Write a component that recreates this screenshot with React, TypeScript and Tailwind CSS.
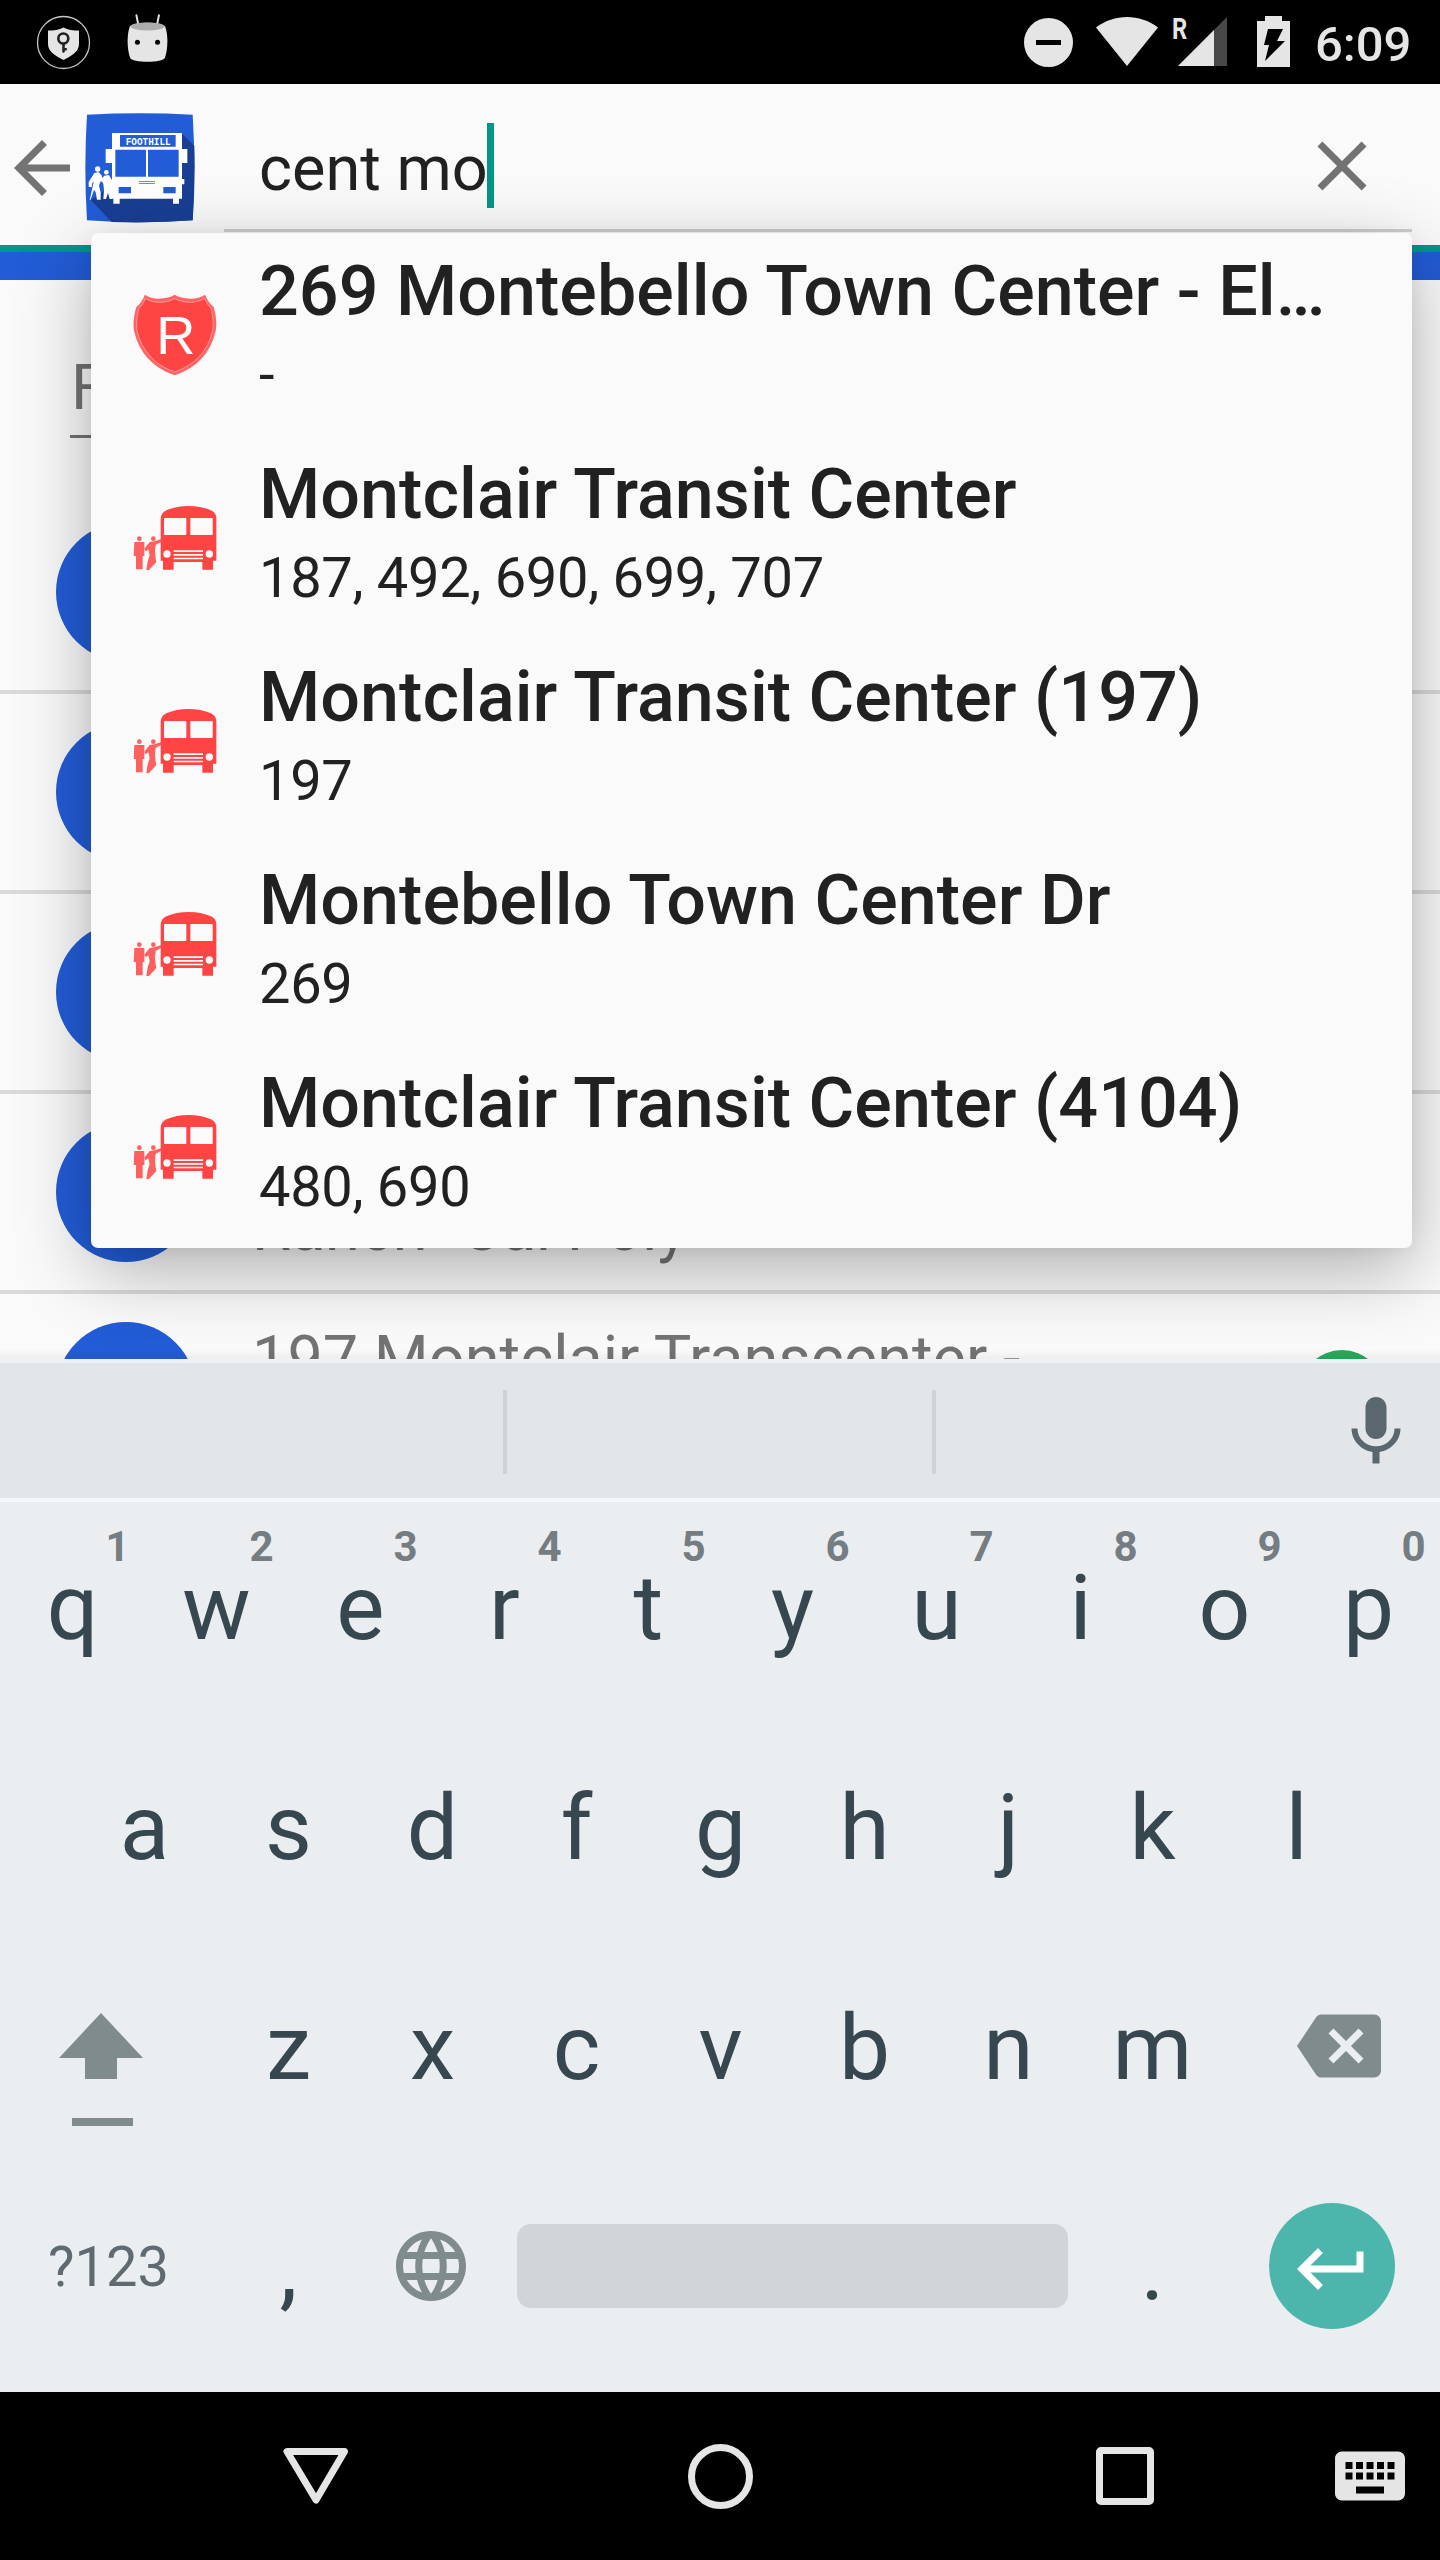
import React, { FC } from "react";
import {
  MdArrowBack,
  MdBackspace,
  MdClose,
  MdKeyboard,
  MdKeyboardReturn,
  MdLanguage,
} from "react-icons/md";

interface ISuggestion {
  type: "route" | "stop";
  title: string;
  routes: string;
}

interface IRoute {
  number: string;
  lines: string[];
}

const suggestions: ISuggestion[] = [
  { type: "route", title: "269 Montebello Town Center - El…", routes: "-" },
  {
    type: "stop",
    title: "Montclair Transit Center",
    routes: "187, 492, 690, 699, 707",
  },
  { type: "stop", title: "Montclair Transit Center (197)", routes: "197" },
  { type: "stop", title: "Montebello Town Center Dr", routes: "269" },
  {
    type: "stop",
    title: "Montclair Transit Center (4104)",
    routes: "480, 690",
  },
];

const routes: IRoute[] = [
  { number: "1", lines: [] },
  { number: "1", lines: [] },
  { number: "1", lines: [] },
  { number: "1", lines: ["", "Ranch- Cal Poly"] },
  { number: "", lines: ["197 Montclair Transcenter -", ""] },
];

const topRow = "qwertyuiop".split("");
const homeRow = "asdfghjkl".split("");
const bottomRow = "zxcvbnm".split("");

const StatusBar: FC = () => (
  <div className="flex h-[84px] shrink-0 items-start bg-black text-[#e5e5e5]">
    <svg className="ml-[36px] mt-[15px] h-[55px] w-[55px]" viewBox="0 0 55 55">
      <circle
        cx="27.5"
        cy="27.5"
        r="26"
        fill="none"
        stroke="#c8c8c8"
        strokeWidth="1.3"
      />
      <path
        d="M27.5 12.5C23 15 18 15.6 12 15.6V29c0 8 8 12 15.5 16C35 41 43 37 43 29V15.6c-6 0-11-.6-15.500-3.100z"
        fill="#e5e5e5"
      />
      <circle
        cx="27.300"
        cy="23.500"
        r="5"
        fill="none"
        stroke="#222"
        strokeWidth="2.600"
      />
      <path d="M26.200 28h2.600v5h2v2.500h-2v1.500l-1.300 1-1.300-1z" fill="#222" />
    </svg>
    <svg
      className="ml-[36px] mt-[14px] h-[49px] w-[41px]"
      viewBox="0 0 122 146"
    >
      <path
        d="M28 4l6 30M95 4l-6 30"
        stroke="#e5e5e5"
        strokeWidth="6"
        strokeLinecap="round"
      />
      <path
        d="M8 38C20 22 102 22 114 38c9 26 8 66-1 92-6 16-98 16-104 0C0 104-1 64 8 38z"
        fill="#e5e5e5"
      />
      <ellipse cx="61" cy="37" rx="50" ry="12" fill="#adadad" />
      <circle cx="31" cy="84" r="7.500" fill="#000" />
      <circle cx="91" cy="84" r="7.500" fill="#000" />
    </svg>
    <svg
      className="ml-auto mt-[18px] h-[49px] w-[49px]"
      viewBox="0 0 49 49"
      fill="#e5e5e5"
    >
      <circle cx="24.500" cy="24.500" r="24.500" />
      <rect x="12" y="22" width="25" height="5" fill="#000" />
    </svg>
    <svg
      className="ml-[23px] mt-[17px] h-[49px] w-[62px]"
      viewBox="0 0 62 49"
      fill="#e5e5e5"
    >
      <path d="M0 10.500C18-3.500 44-3.500 62 10.500L31 49z" />
    </svg>
    <div className="relative ml-[20px] mt-[17px] h-[49px] w-[49px]">
      <svg className="h-[49px] w-[49px]" viewBox="0 0 49 49">
        <path d="M49 0v49H0z" fill="#484848" />
        <path d="M36 13v36H0z" fill="#e5e5e5" />
      </svg>
      <span className="absolute -left-[6px] -top-[4px] origin-left scale-x-[0.82] text-[29px] leading-[32px] font-bold">
        R
      </span>
    </div>
    <svg
      className="ml-[30px] mt-[16px] h-[51px] w-[33px]"
      viewBox="0 0 33 51"
      fill="#e5e5e5"
    >
      <path d="M8 0h17v5h8v46H0V5h8z" />
      <path d="M11 13h15l-6 12h8L8 45l4-16H7z" fill="#000" />
    </svg>
    <div className="mr-[29px] ml-[25px] w-[96px] text-[49px] leading-[89px] font-medium">
      6:09
    </div>
  </div>
);

const AppLogo: FC = () => (
  <svg className="h-[110px] w-[110px]" viewBox="0 0 330 330">
    <path
      d="M6 5Q165-3 323 5Q333 165 323 322Q165 334 6 322Q-4 165 6 5z"
      fill="#225cd6"
    />
    <path d="M291 62l37 36Q331 215 323 322Q200 331 80 327L18 262z" fill="#193f93" />
    <g fill="#fff">
      <path d="M81 60h210v197H81zM85 257h19v15H85zM264 257h18v15h-18z" />
      <path d="M62 108h19v42H62zM291 108h16v42h-16zM81 198h217v16H81z" />
      <circle cx="38" cy="168" r="8" />
      <path d="M28 180l12-3 10 10 4 17-8 2-4 12 5 20v22h-11l-4-22-5-8-6 18-5 13H14l8-36 4-18-4 2-2 14-9-2v-14z" />
      <circle cx="64" cy="178" r="7" />
      <path d="M58 188l14-2 9 16v56h-7l-5-18-6 18h-8l2-26-2-20-8-12z" />
    </g>
    <g fill="#225cd6">
      <path d="M105 66h167v35H105zM91 110h92v81H91zM189 110h92v81h-92z" />
      <path d="M101 222h37v19h-37zM235 222h37v19h-37z" />
      <path d="M162 204h48v3h-48zM162 210h48v3h-48z" opacity=".7" />
    </g>
    <text
      x="122"
      y="97"
      fill="#fff"
      fontFamily="Liberation Mono, monospace"
      fontWeight="700"
      fontSize="34"
      textLength="135"
      lengthAdjust="spacingAndGlyphs"
    >
      FOOTHILL
    </text>
  </svg>
);

const SearchBar: FC = () => (
  <div className="flex h-[168px] shrink-0 border-b-[7px] border-[#009688] bg-[#fafafa] text-[#737373]">
    <MdArrowBack className="mt-[42px] size-[84px] shrink-0" />
    <div className="mt-[29px] ml-px shrink-0">
      <AppLogo />
    </div>
    <div className="mr-[28px] ml-[29px] flex h-[148px] flex-1 items-start border-b-[3px] border-[#d0d0d0]">
      <div className="ml-[35px] text-[63px] leading-[170px] text-[#212121]">
        cent mo
      </div>
      <div className="mt-[39px] -ml-px h-[85px] w-[7px] bg-[#009688]" />
      <MdClose className="mt-[40px] mr-[28px] ml-auto size-[84px]" />
    </div>
  </div>
);

const RouteList: FC = () => (
  <div className="flex flex-col">
    {routes.map((route, i) => (
      <div
        key={i}
        className="flex h-[200px] shrink-0 items-center border-b-4 border-[#dadada] pr-[56px] pl-[56px]"
      >
        <div className="flex size-[140px] shrink-0 items-center rounded-full bg-[#225cd6] pl-[33px] text-[42px] text-white">
          {route.number}
        </div>
        <div className="ml-[56px] flex-1 pt-[4px] text-[63px] leading-[70px] text-[#737373]">
          {route.lines.map((line, j) => (
            <div key={j} className="h-[70px]">
              {line}
            </div>
          ))}
        </div>
        <div className="size-[84px] rounded-full bg-[#27a95a]" />
      </div>
    ))}
  </div>
);

const RouteShieldIcon: FC = () => (
  <svg className="h-[82px] w-[84px]" viewBox="0 0 254 246">
    <path
      d="M36 1Q60 17 92 12Q114 9 126 1Q138 9 160 12Q194 17 218 1Q228 26 244 38Q256 80 250 110Q228 210 126 245Q26 210 3 110Q-2 80 10 38Q26 26 36 1z"
      fill="#ff6464"
    />
    <path
      d="M38 12Q62 28 94 23Q115 20 126 13Q138 20 158 23Q192 28 216 12Q226 32 236 43Q246 80 241 110Q219 202 126 235Q34 202 12 110Q8 80 18 43Q30 32 38 12z"
      fill="#ff4444"
      stroke="#ff9a9a"
      strokeWidth="3"
    />
    <text
      x="70"
      y="180"
      fill="#fff"
      fontFamily="Liberation Sans, sans-serif"
      fontSize="164"
    >
      R
    </text>
  </svg>
);

const BusStopIcon: FC = () => (
  <svg className="h-[64px] w-[84px]" viewBox="0 0 252 192" fill="#ff4444">
    <path d="M83 38Q84 20 100 13Q130 0 167 0Q204 0 234 13Q250 20 250 38V164H240V191H208V168H122V191H90V164H83z" />
    <g fill="#fafafa">
      <rect x="93" y="36" width="67" height="51" rx="2" />
      <rect x="172" y="36" width="67" height="51" rx="2" />
      <circle cx="102" cy="144" r="11" />
      <circle cx="229" cy="144" r="11" />
      <path d="M122 133h88v5h-88zM122 144h88v5h-88zM122 155h88v5h-88z" />
    </g>
    <g opacity=".85">
      <circle cx="19" cy="98" r="7" />
      <path d="M4 108h30v42h-5v40H9v-40H2z" />
      <circle cx="61" cy="98" r="7" />
      <path d="M50 108l14-2 20-6v8l-16 8-2 20 2 22 2 10-22 24h-8l4-26 6-18-4-18-8 6-4-8z" />
    </g>
  </svg>
);

const SuggestionsPopup: FC = () => (
  <div className="absolute top-[149px] left-[91px] w-[1321px] rounded-[7px] bg-[#fafafa] text-[#212121] shadow-[0_22px_76px_rgba(0,0,0,0.3),0_2px_16px_rgba(0,0,0,0.06)]">
    {suggestions.map(({ type, title, routes }) => (
      <div key={title} className="flex h-[203px] pl-[42px]">
        <div className="flex w-[126px] shrink-0 items-center">
          {type === "route" ? <RouteShieldIcon /> : <BusStopIcon />}
        </div>
        <div className="min-w-0 flex-1 pt-[17px] whitespace-nowrap">
          <div className="text-[70px] leading-[82px] font-medium tracking-[0.05px]">
            {title}
          </div>
          <div className="text-[56px] leading-[86px] tracking-[-0.3px]">
            {routes}
          </div>
        </div>
      </div>
    ))}
  </div>
);

const Key: FC<{ label: string; hint?: string }> = ({ label, hint }) => (
  <div className="relative w-[144px] pl-px text-center text-[91px] leading-[212px] text-[#37474f]">
    {label}
    {hint && (
      <span className="absolute top-[15px] left-[94px] w-[47px] text-[42px] leading-[60px] font-bold text-[#737d82]">
        {hint}
      </span>
    )}
  </div>
);

const Keyboard: FC = () => (
  <div className="flex h-[1033px] shrink-0 flex-col bg-[#ebeef1]">
    <div className="flex h-[143px] items-center border-t-4 border-b-4 border-t-[#eff2f4] border-b-[#f4f8fb] bg-[#e3e6e9] pt-[3px]">
      <div className="h-[84px] w-[507px] border-r-4 border-[#cfd3d6]" />
      <div className="h-[84px] w-[429px] border-r-4 border-[#cfd3d6]" />
      <svg
        className="mr-[22px] ml-auto size-[84px]"
        viewBox="0 0 24 24"
        fill="#5b676e"
      >
        <path d="M12 14c1.660 0 3-1.340 3-3V5c0-1.660-1.340-3-3-3S9 3.340 9 5v6c0 1.660 1.340 3 3 3zm5.300-3c0 3-2.540 5.100-5.300 5.100S6.700 14 6.700 11H5c0 3.410 2.720 6.230 6 6.720V21h2v-3.280c3.280-.48 6-3.300 6-6.720z" />
      </svg>
    </div>
    <div className="flex h-[220px]">
      {topRow.map((letter, i) => (
        <Key key={letter} label={letter} hint={String((i + 1) % 10)} />
      ))}
    </div>
    <div className="flex h-[220px] justify-center">
      {homeRow.map((letter) => (
        <Key key={letter} label={letter} />
      ))}
    </div>
    <div className="flex h-[220px]">
      <div className="w-[216px] pt-[71px] pl-[59px]">
        <svg className="h-[113px] w-[84px]" viewBox="0 0 84 113" fill="#808b8e">
          <path d="M42 0l42 45H58v21H26V45H0z" />
          <path d="M13 105h61v8H13z" />
        </svg>
      </div>
      {bottomRow.map((letter) => (
        <Key key={letter} label={letter} />
      ))}
      <div className="flex h-[208px] w-[216px] items-center pl-[73px]">
        <MdBackspace className="size-[84px] text-[#808b8e]" />
      </div>
    </div>
    <div className="flex h-[220px]">
      <div className="w-[216px] pl-px text-center text-[56px] leading-[210px] text-[#5f6b70]">
        ?123
      </div>
      <Key label="," />
      <div className="flex h-[208px] w-[144px] items-center pl-[29px]">
        <MdLanguage className="size-[84px] text-[#808b8e]" />
      </div>
      <div className="flex h-[208px] w-[576px] items-center pl-[13px]">
        <div className="h-[84px] w-[551px] rounded-[14px] bg-[#d1d5d8]" />
      </div>
      <Key label="." />
      <div className="flex h-[208px] w-[216px] items-center justify-center">
        <div className="flex size-[126px] items-center justify-center rounded-full bg-[#4db6ac] pt-[6px]">
          <MdKeyboardReturn className="size-[84px] text-white" />
        </div>
      </div>
    </div>
  </div>
);

const NavBar: FC = () => (
  <div className="flex h-[168px] shrink-0 items-center bg-black text-[#e5e5e5]">
    <svg
      className="ml-[283px] h-[66px] w-[66px]"
      viewBox="0 0 66 66"
      fill="none"
      stroke="#e5e5e5"
      strokeWidth="7"
      strokeLinejoin="round"
    >
      <path d="M4 8.500h57.500L33 57z" />
    </svg>
    <div className="ml-[339px] size-[65px] rounded-full border-[7px] border-[#e5e5e5]" />
    <div className="ml-[343px] size-[58px] rounded-[5px] border-[7px] border-[#e5e5e5]" />
    <MdKeyboard className="ml-[174px] size-[84px]" />
  </div>
);

const App: FC = () => (
  <div className="flex h-[2560px] w-[1440px] flex-col overflow-hidden bg-[#fafafa] font-[Roboto,sans-serif]">
    <StatusBar />
    <div className="relative flex h-[1275px] shrink-0 flex-col overflow-hidden">
      <SearchBar />
      <div className="h-[28px] shrink-0 bg-[#225cd6]" />
      <div className="mx-[70px] mb-[56px] h-[158px] shrink-0 border-b-[3px] border-[#737373] pt-[71px] pl-[1px] text-[63px] leading-[74px] text-[#737373]">
        F
      </div>
      <RouteList />
      <SuggestionsPopup />
      <div className="absolute inset-x-0 bottom-0 h-[10px] bg-linear-to-b from-transparent to-black/5" />
    </div>
    <Keyboard />
    <NavBar />
  </div>
);

export default App;
